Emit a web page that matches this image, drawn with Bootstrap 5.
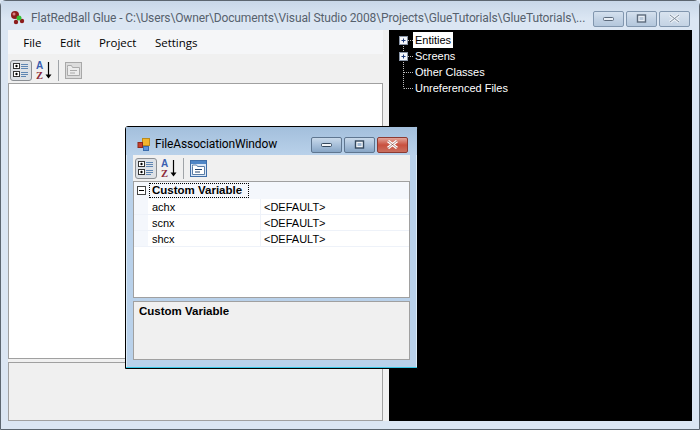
<!DOCTYPE html>
<html lang="en">
<head>
    <meta charset="UTF-8">
    <title>FlatRedBall Glue</title>
    <link href="https://cdn.jsdelivr.net/npm/bootstrap@5.3.3/dist/css/bootstrap.min.css" rel="stylesheet">
    <style>
        html, body { margin: 0; width: 700px; height: 430px; overflow: hidden; background: #dbe6f3; }
        svg { display: block; flex: none; }

        /* window frames */
        .app-window { position: relative; width: 700px; height: 430px; border: 1px solid #5c6670; border-radius: 6px 6px 0 0; background: #dbe6f3; }
        .app-title { height: 29px; padding: 5px 9px 0 10px; background: linear-gradient(#c8d7e8, #dbe6f3 18px); }
        .title-text { font: 12px Roboto, "Noto Sans", sans-serif; letter-spacing: -.13px; color: #56616d; white-space: nowrap; }
        .app-body { height: 391px; padding: 0 7px; }
        .left-side { width: 375px; background: #f0f0f0; }
        .splitter { width: 6px; background: #f0f0f0; }
        .menu-strip { height: 24px; padding-left: 6px; background: #f5f6f8; font: 11.5px "Open Sans", "Noto Sans", sans-serif; color: #000; }
        .menu-entry { padding: 0 9.25px; }
        .tool-strip { height: 29px; padding: 3px 2px 0; background: #f0f0f0; }
        .tool-btn { width: 22px; height: 21px; }
        .tool-btn.on { border: 1px solid #8b8f94; border-radius: 3px; background: #dde1e6; }
        .tool-sep { width: 1px; height: 21px; background: #a0a4a8; margin: 0 6px 0 4px; }
        .grid-blank { flex: 1; background: #fff; border: 1px solid #a0a0a0; }
        .help-blank { height: 59px; margin-top: 3px; background: #f0f0f0; border: 1px solid #a0a0a0; }

        /* tree */
        .tree-pane { flex: 1; background: #000; color: #fff; padding: 2px 0 0 8px; font: 11px/16px "Liberation Sans", sans-serif; }
        .tree-row { height: 16px; }
        .tree-label { padding: 0 2px; }
        .tree-label.picked { background: #fff; color: #000; }

        /* caption buttons */
        .cap-row { gap: 2px; margin-top: 1px; }
        .cap-btn { width: 31px; height: 16px; border: 1px solid #8196ae; border-radius: 2px; background: linear-gradient(#d5e1ee, #c2d2e4 50%, #b4c7dc); }
        .cap-btn.shut { background: linear-gradient(#d8e3ef, #c4d3e4); }
        .cap-btn.shut-live { border-color: #8c3a32; background: linear-gradient(#e2a59a, #c9503f 50%, #c96f5f); }
        .cap-btn.live { border-color: #5f7690; background: linear-gradient(#c9d9ea, #a8c0da 50%, #88a6c6); }

        /* floating dialog */
        .dlg-window { position: absolute; left: 124px; top: 125px; width: 293px; height: 243px; border: 1px solid #000; border-radius: 3px 3px 0 0; background: #b9d1ea; box-shadow: inset 0 -1px 0 #37c6e4, inset -1px 0 0 #dcebf8, inset 1px 0 0 #dcebf8; }
        .dlg-title { height: 28px; padding: 6px 9px 0 11px; background: linear-gradient(#a3bfdc, #b9d1ea); }
        .dlg-title .title-text { color: #000; }
        .dlg-body { margin: 0 7px; }
        .dlg-tools { height: 26px; padding: 0 2px; background: #f0f0f0; }
        .prop-grid { height: 117px; background: #fff; border: 1px solid #a0a0a0; font: 11px "Liberation Sans", sans-serif; color: #000; }
        .cat-row { height: 17px; background: #f4f7fc; padding-left: 3px; }
        .cat-label { font-weight: 700; font-size: 11.5px; height: 15px; line-height: 14px; margin-left: 3px; padding: 0 3px; outline: 1px dotted #000; outline-offset: -1px; width: 100px; white-space: nowrap; }
        .prop-row { height: 16px; line-height: 17px; border-bottom: 1px solid #eef2f9; }
        .prop-gutter { width: 14px; background: #f4f7fc; }
        .prop-name { width: 113px; padding-left: 4px; border-right: 1px solid #eef2f9; }
        .prop-value { padding-left: 3px; }
        .help-box { height: 59px; margin-top: 3px; padding: 3px 5px; background: #f0f0f0; border: 1px solid #a0a0a0; font: 700 11.5px "Liberation Sans", sans-serif; color: #000; }
    </style>
</head>
<body>

<div class="app-window">
    <div class="app-title d-flex align-items-center">
        <svg width="16" height="18" viewBox="0 0 16 18">
            <circle cx="4" cy="6" r="4" fill="#8c1c1c"/>
            <circle cx="3" cy="5" r="1.5" fill="#d88080"/>
            <circle cx="5" cy="13" r="2.2" fill="#8c1c1c"/>
            <circle cx="11" cy="12" r="2.2" fill="#8c1c1c"/>
            <circle cx="8" cy="9" r="2.5" fill="#35c035"/>
        </svg>
        <span class="title-text flex-grow-1 overflow-hidden ms-1">FlatRedBall Glue - C:\Users\Owner\Documents\Visual Studio 2008\Projects\GlueTutorials\GlueTutorials\...</span>
        <div class="cap-row d-flex ms-1">
            <div class="cap-btn d-flex align-items-center justify-content-center"><svg width="12" height="6"><rect x=".5" y="1.5" width="10" height="3" rx="1" fill="#e8eef5" stroke="#5d6b7c"/></svg></div>
            <div class="cap-btn d-flex align-items-center justify-content-center"><svg width="12" height="9"><rect x="1.5" y="1" width="8" height="7" fill="#e8eef5" stroke="#5d6b7c" stroke-width="1.4"/><rect x="3.5" y="3" width="4" height="3" fill="#b8c8da"/></svg></div>
            <div class="cap-btn shut d-flex align-items-center justify-content-center"><svg width="13" height="9"><path d="M2 1 L11 8 M11 1 L2 8" stroke="#eef2f7" stroke-width="3"/><path d="M2 1 L11 8 M11 1 L2 8" stroke="#7d8b9b" stroke-width="1"/></svg></div>
        </div>
    </div>

    <div class="app-body d-flex">
        <div class="left-side d-flex flex-column">
            <div class="menu-strip d-flex align-items-center">
                <span class="menu-entry">File</span>
                <span class="menu-entry">Edit</span>
                <span class="menu-entry">Project</span>
                <span class="menu-entry">Settings</span>
            </div>
            <div class="tool-strip d-flex align-items-center">
                <div class="tool-btn on d-flex align-items-center justify-content-center">
                    <svg width="18" height="16" viewBox="0 0 18 16">
                        <rect x="1.5" y="1.5" width="6" height="5" fill="#fff" stroke="#333"/><path d="M3 4h3M4.500 2.800v2.400" stroke="#000"/>
                        <rect x="1.5" y="9.500" width="6" height="5" fill="#fff" stroke="#333"/><path d="M3 12h3M4.500 10.800v2.400" stroke="#000"/>
                        <path d="M9 2.500h7M9 4.500h7M9 6.500h7M9 10.500h7M9 12.500h7M9 14.500h5" stroke="#5f86b3"/>
                    </svg>
                </div>
                <svg width="18" height="21" viewBox="0 0 18 21" class="ms-1">
                    <text x="0" y="9" font-family="Liberation Sans" font-size="10" font-weight="700" fill="#3a5fb0">A</text>
                    <text x="0" y="19" font-family="Liberation Serif" font-size="10.500" font-weight="700" fill="#8c2a3a">Z</text>
                    <path d="M12.500 2V16" stroke="#000" stroke-width="1.200"/><path d="M9.500 14.500h6l-3 4z" fill="#000"/>
                </svg>
                <div class="tool-sep"></div>
                <svg width="17" height="17" viewBox="0 0 17 17">
                    <rect x=".5" y=".5" width="16" height="16" fill="#dcdcdc" stroke="#a8a8a8"/>
                    <path d="M2.500 5.500V3.500h4l1 2h7v8h-12z" fill="#ececec" stroke="#ababab"/>
                    <path d="M5 8.500h7M5 11h5" stroke="#aaa"/>
                </svg>
            </div>
            <div class="grid-blank"></div>
            <div class="help-blank"></div>
        </div>
        <div class="splitter"></div>
        <div class="tree-pane">
            <div class="tree-row d-flex">
                <svg width="16" height="16" viewBox="0 0 16 16">
                    <path d="M6.500 12V16M11 8.500H16" stroke="#bbb" stroke-dasharray="1 1"/>
                    <rect x="2.500" y="4.500" width="8" height="8" fill="#f4f6fa" stroke="#8a96a8"/><path d="M4.500 8.500h4M6.500 6.500v4" stroke="#1c3a7a"/>
                </svg>
                <span class="tree-label picked">Entities</span>
            </div>
            <div class="tree-row d-flex">
                <svg width="16" height="16" viewBox="0 0 16 16">
                    <path d="M6.500 0V4M6.500 12V16M11 8.500H16" stroke="#bbb" stroke-dasharray="1 1"/>
                    <rect x="2.500" y="4.500" width="8" height="8" fill="#f4f6fa" stroke="#8a96a8"/><path d="M4.500 8.500h4M6.500 6.500v4" stroke="#1c3a7a"/>
                </svg>
                <span class="tree-label">Screens</span>
            </div>
            <div class="tree-row d-flex">
                <svg width="16" height="16" viewBox="0 0 16 16"><path d="M6.500 0V16M7 8.500H16" stroke="#bbb" stroke-dasharray="1 1"/></svg>
                <span class="tree-label">Other Classes</span>
            </div>
            <div class="tree-row d-flex">
                <svg width="16" height="16" viewBox="0 0 16 16"><path d="M6.500 0V8.500M7 8.500H16" stroke="#bbb" stroke-dasharray="1 1"/></svg>
                <span class="tree-label">Unreferenced Files</span>
            </div>
        </div>
    </div>

    <div class="dlg-window">
        <div class="dlg-title d-flex align-items-center">
            <svg width="14" height="15" viewBox="0 0 14 15" class="me-1">
                <rect x="5.500" y="1.500" width="7" height="7" fill="#f2b42c" stroke="#b98a1c"/>
                <rect x="1" y="5.500" width="4.500" height="5" fill="#c8402c" stroke="#8c2a1c"/>
                <rect x="6.500" y="9.500" width="5" height="4" fill="#5c94dc" stroke="#3a6cac"/>
            </svg>
            <span class="title-text flex-grow-1">FileAssociationWindow</span>
            <div class="cap-row d-flex">
                <div class="cap-btn live d-flex align-items-center justify-content-center"><svg width="12" height="6"><rect x=".5" y="1.500" width="10" height="3" rx="1" fill="#f2f5f9" stroke="#33475c"/></svg></div>
                <div class="cap-btn live d-flex align-items-center justify-content-center"><svg width="12" height="9"><rect x="1.500" y="1" width="8" height="7" fill="#f2f5f9" stroke="#33475c" stroke-width="1.400"/><rect x="3.500" y="3" width="4" height="3" fill="#9fb8d3"/></svg></div>
                <div class="cap-btn shut-live d-flex align-items-center justify-content-center"><svg width="13" height="9"><path d="M2 1 L11 8 M11 1 L2 8" stroke="#fff" stroke-width="3"/><path d="M2 1 L11 8 M11 1 L2 8" stroke="#7a3a32" stroke-width=".6"/></svg></div>
            </div>
        </div>
        <div class="dlg-body">
            <div class="dlg-tools d-flex align-items-center">
                <div class="tool-btn on d-flex align-items-center justify-content-center">
                    <svg width="18" height="16" viewBox="0 0 18 16">
                        <rect x="1.500" y="1.500" width="6" height="5" fill="#fff" stroke="#333"/><path d="M3 4h3M4.500 2.800v2.400" stroke="#000"/>
                        <rect x="1.500" y="9.500" width="6" height="5" fill="#fff" stroke="#333"/><path d="M3 12h3M4.500 10.800v2.400" stroke="#000"/>
                        <path d="M9 2.500h7M9 4.500h7M9 6.500h7M9 10.500h7M9 12.500h7M9 14.500h5" stroke="#5f86b3"/>
                    </svg>
                </div>
                <svg width="18" height="21" viewBox="0 0 18 21" class="ms-1">
                    <text x="0" y="9" font-family="Liberation Sans" font-size="10" font-weight="700" fill="#3a5fb0">A</text>
                    <text x="0" y="19" font-family="Liberation Serif" font-size="10.500" font-weight="700" fill="#8c2a3a">Z</text>
                    <path d="M12.500 2V16" stroke="#000" stroke-width="1.200"/><path d="M9.500 14.500h6l-3 4z" fill="#000"/>
                </svg>
                <div class="tool-sep"></div>
                <svg width="17" height="17" viewBox="0 0 17 17">
                    <rect x=".5" y=".5" width="16" height="16" fill="#dbe7f6" stroke="#3f6ea8"/>
                    <rect x="1" y="1" width="15" height="3" fill="#4f86c6"/>
                    <path d="M2.500 6.500V5h4l1 1.500h7v8h-12z" fill="#fff" stroke="#5a7ea8"/>
                    <path d="M5 9.500h7M5 12h5" stroke="#25446e"/>
                </svg>
            </div>
            <div class="prop-grid">
                <div class="cat-row d-flex align-items-center">
                    <svg width="9" height="9" viewBox="0 0 9 9"><rect x=".5" y=".5" width="8" height="8" fill="#fff" stroke="#444"/><path d="M2 4.500h5" stroke="#000"/></svg>
                    <div class="cat-label">Custom Variable</div>
                </div>
                <div class="prop-row d-flex"><div class="prop-gutter"></div><div class="prop-name">achx</div><div class="prop-value">&lt;DEFAULT&gt;</div></div>
                <div class="prop-row d-flex"><div class="prop-gutter"></div><div class="prop-name">scnx</div><div class="prop-value">&lt;DEFAULT&gt;</div></div>
                <div class="prop-row d-flex"><div class="prop-gutter"></div><div class="prop-name">shcx</div><div class="prop-value">&lt;DEFAULT&gt;</div></div>
            </div>
            <div class="help-box">Custom Variable</div>
        </div>
    </div>
</div>

<script src="https://cdn.jsdelivr.net/npm/bootstrap@5.3.3/dist/js/bootstrap.bundle.min.js"></script>
</body>
</html>
